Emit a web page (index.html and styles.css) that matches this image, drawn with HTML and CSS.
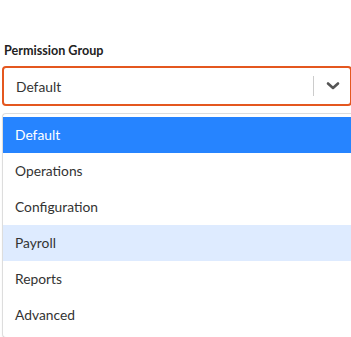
FILE: index.html
```html
<!DOCTYPE html>
<html lang="en">

<head>
    <meta charset="UTF-8">
    <meta name="viewport" content="width=device-width, initial-scale=1.0">
    <title>Permission Group</title>
    <link rel="stylesheet" href="styles.css">
</head>

<body>
    <div class="field">
        <label class="field-label">Permission Group</label>
        <div class="select-control">
            <div class="select-value">Default</div>
            <div class="select-indicators">
                <span class="select-separator"></span>
                <span class="select-chevron">
                    <svg width="20" height="20" viewBox="0 0 20 20">
                        <path d="M5 7.5 L10 12 L15 7.5" fill="none" stroke="#555" stroke-width="2.6" stroke-linecap="round" stroke-linejoin="round"/>
                    </svg>
                </span>
            </div>
        </div>
        <div class="select-menu">
            <div class="option selected">Default</div>
            <div class="option">Operations</div>
            <div class="option">Configuration</div>
            <div class="option focused">Payroll</div>
            <div class="option">Reports</div>
            <div class="option">Advanced</div>
        </div>
    </div>
</body>

</html>
```

FILE: styles.css
```css
* {
    margin: 0;
    padding: 0;
    box-sizing: border-box;
}

body {
    font-family: 'Lato', 'Liberation Sans', sans-serif;
    background: #fff;
    color: #333;
}

.field {
    padding: 42px 0 0 2px;
    width: 352px;
}

.field-label {
    display: block;
    font-size: 12.6px;
    font-weight: bold;
    color: #222;
    padding-left: 2px;
    margin-bottom: 7px;
    line-height: 17px;
}

.select-control {
    display: flex;
    align-items: center;
    height: 40px;
    border: 2px solid #e4571f;
    border-radius: 4px;
    background: #fff;
}

.select-value {
    flex: 1;
    padding-left: 12px;
    font-size: 13.8px;
    color: #333;
}

.select-indicators {
    display: flex;
    align-items: center;
    align-self: stretch;
}

.select-separator {
    width: 1px;
    align-self: stretch;
    margin: 8px 0;
    background: #ccc;
}

.select-chevron {
    display: flex;
    padding: 8px 7px 8px 9px;
}

.select-menu {
    margin-top: 7px;
    border: 1px solid #ddd;
    border-right: none;
    border-radius: 4px 0 0 4px;
    padding: 3px 0 4px;
    box-shadow: 0 1px 2px rgba(0, 0, 0, 0.06);
}

.option {
    height: 36px;
    line-height: 36px;
    padding-left: 12px;
    font-size: 13.8px;
    color: #333;
}

.option.selected {
    background: #2684ff;
    color: #fff;
}

.option.focused {
    background: #deebff;
}
```
